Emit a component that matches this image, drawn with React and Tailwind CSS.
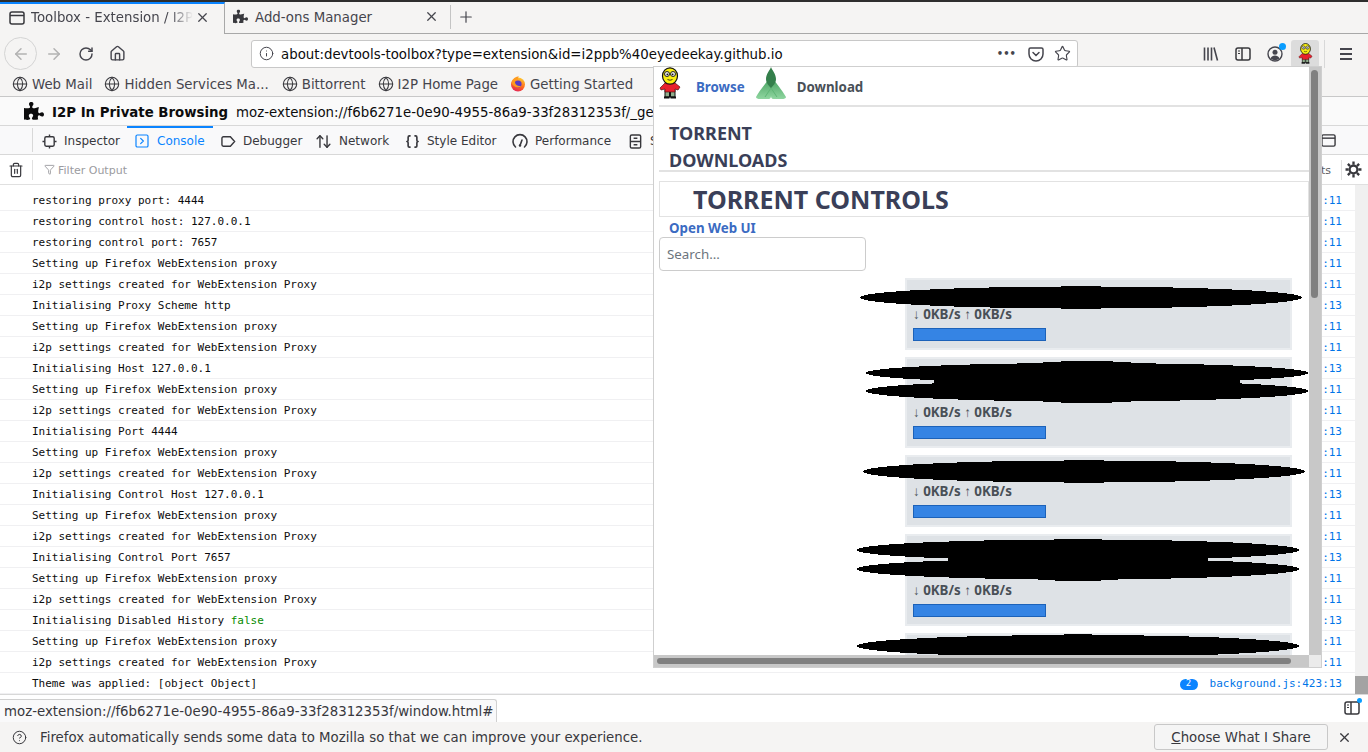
import React from "react";
import {
  ArrowLeft,
  ArrowRight,
  RotateCw,
  Home,
  Info,
  Star,
  X,
  Plus,
  Globe,
  Trash2,
  Filter,
  SquareChevronRight,
  ArrowUpDown,
  Braces,
  CircleHelp,
} from "lucide-react";
import { FaPuzzlePiece } from "react-icons/fa";

const SETUP = "Setting up Firefox WebExtension proxy";
const CREATED = "i2p settings created for WebExtension Proxy";

const logs = [
  { text: "restoring proxy port: 4444", line: "11" },
  { text: "restoring control host: 127.0.0.1", line: "11" },
  { text: "restoring control port: 7657", line: "11" },
  { text: SETUP, line: "11" },
  { text: CREATED, line: "11" },
  { text: "Initialising Proxy Scheme http", line: "13" },
  { text: SETUP, line: "11" },
  { text: CREATED, line: "11" },
  { text: "Initialising Host 127.0.0.1", line: "13" },
  { text: SETUP, line: "11" },
  { text: CREATED, line: "11" },
  { text: "Initialising Port 4444", line: "13" },
  { text: SETUP, line: "11" },
  { text: CREATED, line: "11" },
  { text: "Initialising Control Host 127.0.0.1", line: "13" },
  { text: SETUP, line: "11" },
  { text: CREATED, line: "11" },
  { text: "Initialising Control Port 7657", line: "13" },
  { text: SETUP, line: "11" },
  { text: CREATED, line: "11" },
  { text: "Initialising Disabled History ", value: "false", line: "13" },
  { text: SETUP, line: "11" },
  { text: CREATED, line: "11" },
  { text: "Theme was applied: [object Object]", line: "13", badge: "2" },
];

const Mascot = ({ className }) => (
  <svg viewBox="0 0 22 32" className={className}>
    <rect x="6" y="23" width="4.5" height="7" fill="#8fae8c" stroke="#111" strokeWidth="1" />
    <rect x="11.5" y="23" width="4.5" height="7" fill="#8fae8c" stroke="#111" strokeWidth="1" />
    <rect x="5" y="29.5" width="5.5" height="2" fill="#111" />
    <rect x="11.5" y="29.5" width="5.5" height="2" fill="#111" />
    <path d="M6 16h10l5 4-2 3-3-1v3H6v-3l-4 1-1-2z" fill="#e8202c" stroke="#511" strokeWidth="0.7" />
    <ellipse cx="11" cy="9" rx="7.5" ry="8.2" fill="#f8ee10" stroke="#111" strokeWidth="1.2" />
    <circle cx="8" cy="7" r="2.5" fill="#e9e9e9" stroke="#111" strokeWidth="0.9" />
    <circle cx="14" cy="7" r="2.5" fill="#e9e9e9" stroke="#111" strokeWidth="0.9" />
    <circle cx="8.4" cy="7.3" r="0.9" fill="#111" />
    <circle cx="13.6" cy="7.3" r="0.9" fill="#111" />
    <path d="M8.5 12.5q2.5 1.5 5 0" fill="none" stroke="#111" strokeWidth="0.8" />
  </svg>
);

const GreenLogo = () => (
  <svg viewBox="0 0 32 34" className="w-[32px] h-[34px] shrink-0">
    <defs>
      <linearGradient id="leaf" x1="0" y1="0" x2="0" y2="1">
        <stop offset="0" stopColor="#3f9a58" />
        <stop offset="1" stopColor="#8fd6a0" />
      </linearGradient>
    </defs>
    <path d="M16 10C11 17 5 24 1 31c0 1.500 2 2 4 2h9c1 0 2-1 2-3 0 2 1 3 2 3h9c2 0 4-.5 4-2-4-7-10-14-15-21z" fill="url(#leaf)" />
    <path d="M16 1c-1 3-5 7-5 12 0 4 3 7 5 9 2-2 5-5 5-9 0-5-4-9-5-12z" fill="#347f4b" />
    <path d="M16 22l-6 9M16 22l6 9" stroke="#5fb676" strokeWidth="1" fill="none" />
  </svg>
);

const FirefoxIcon = () => (
  <svg viewBox="0 0 16 16" className="w-[16px] h-[16px] shrink-0">
    <defs>
      <linearGradient id="fx" x1="0.7" y1="0" x2="0.3" y2="1">
        <stop offset="0" stopColor="#ffcb2f" />
        <stop offset="0.55" stopColor="#ff6a1f" />
        <stop offset="1" stopColor="#e3215a" />
      </linearGradient>
    </defs>
    <circle cx="8" cy="8.500" r="7" fill="url(#fx)" />
    <circle cx="8" cy="8" r="3.600" fill="#5b3bc4" />
    <path d="M2 6c1-4 4-5.500 7-5.500-1 1-1.500 2-1 3-2 0-3.500 1-3 3 .5 3 4 4.500 7 3-1.500 2-6 3-8.500 0C2 8.500 1.800 7 2 6z" fill="#ff9a1f" />
  </svg>
);

const TabIcon = () => (
  <svg viewBox="0 0 16 16" className="w-[16px] h-[16px] shrink-0" fill="none" stroke="#38383d" strokeWidth="1.500">
    <rect x="1" y="2" width="14" height="12" rx="2" />
    <path d="M1 5.500h14" />
  </svg>
);

const PocketIcon = () => (
  <svg viewBox="0 0 16 16" className="w-[16px] h-[16px]" fill="none" stroke="#45454d" strokeWidth="1.500">
    <path d="M2.500 2h11A1.500 1.500 0 0 1 15 3.500V8a7 7 0 0 1-14 0V3.500A1.500 1.500 0 0 1 2.500 2z" />
    <path d="M5 6.500l3 3 3-3" strokeLinecap="round" />
  </svg>
);

const LibraryIcon = () => (
  <svg viewBox="0 0 16 16" className="w-[16px] h-[16px]" fill="none" stroke="#45454d" strokeWidth="1.600">
    <path d="M1.500 1.500v13M5 1.500v13M8.500 1.500v13M11 1.500l3.500 13" />
  </svg>
);

const SidebarIcon = ({ className }) => (
  <svg viewBox="0 0 16 16" className={className} fill="none" stroke="#38383d" strokeWidth="1.500">
    <rect x="1" y="2" width="14" height="12" rx="2" />
    <path d="M7 2v12" />
    <path d="M3 5h2M3 7.500h2" strokeWidth="1" />
  </svg>
);

const AccountIcon = () => (
  <svg viewBox="0 0 16 16" className="w-[16px] h-[16px]" fill="none" stroke="#45454d" strokeWidth="1.400">
    <circle cx="8" cy="8" r="7" />
    <circle cx="8" cy="6.300" r="2.500" fill="#45454d" stroke="none" />
    <path d="M3.500 12.500c1-2.200 2.600-3 4.500-3s3.500.8 4.500 3a6.500 6.500 0 0 1-9 0z" fill="#45454d" stroke="none" />
  </svg>
);

const MenuIcon = () => (
  <svg viewBox="0 0 14 14" className="w-[14px] h-[14px]" fill="none" stroke="#45454d" strokeWidth="1.800">
    <path d="M1 2h12M1 7h12M1 12h12" />
  </svg>
);

const InspectorIcon = () => (
  <svg viewBox="0 0 16 16" className="w-[15px] h-[15px]" fill="none" stroke="#38383d" strokeWidth="1.500">
    <rect x="3" y="3" width="10" height="10" rx="1.500" />
    <path d="M8 0.500V3M8 13v2.500M0.500 8H3M13 8h2.500" />
  </svg>
);

const DebuggerIcon = () => (
  <svg viewBox="0 0 16 16" className="w-[15px] h-[15px]" fill="none" stroke="#38383d" strokeWidth="1.500">
    <path d="M2.500 3h7.500l4.500 5-4.500 5H2.500A1.500 1.500 0 0 1 1 11.500v-7A1.500 1.500 0 0 1 2.500 3z" />
  </svg>
);

const GaugeIcon = () => (
  <svg viewBox="0 0 16 16" className="w-[16px] h-[16px]" fill="none" stroke="#38383d" strokeWidth="1.600">
    <path d="M3.500 14A7 7 0 1 1 12.500 14" strokeLinecap="round" />
    <path d="M8 12.500l2-5.500" strokeLinecap="round" />
    <circle cx="8" cy="12.500" r="1.200" fill="#38383d" stroke="none" />
  </svg>
);

const StorageIcon = () => (
  <svg viewBox="0 0 16 16" className="w-[15px] h-[15px]" fill="none" stroke="#38383d" strokeWidth="1.500">
    <rect x="2.500" y="1" width="11" height="14" rx="1.500" />
    <path d="M2.500 8h11M6 4.500h4M6 11.500h4" />
  </svg>
);

const DockIcon = () => (
  <svg viewBox="0 0 16 16" className="w-[15px] h-[15px]" fill="none" stroke="#38383d" strokeWidth="1.500">
    <rect x="1" y="2" width="14" height="12" rx="1.500" />
    <path d="M1 5.500h14" />
  </svg>
);

const GearIcon = () => (
  <svg viewBox="0 0 16 16" className="ml-[3px] mr-[6px] w-[17px] h-[17px]" fill="none" stroke="#38383d">
    <circle cx="8" cy="8" r="3.600" strokeWidth="2" />
    <path d="M8 .5v3M8 12.500v3M.5 8h3M12.500 8h3M2.700 2.700l2.100 2.100M11.200 11.200l2.100 2.100M13.300 2.700l-2.100 2.100M4.800 11.200l-2.100 2.100" strokeWidth="2.200" />
  </svg>
);

const bookmarks = [
  { label: "Web Mail", className: "ml-[12px]" },
  { label: "Hidden Services Ma...", className: "ml-[12px]" },
  { label: "Bittorrent", className: "ml-[13px]" },
  { label: "I2P Home Page", className: "ml-[12px]" },
  { label: "Getting Started", className: "ml-[12px]", firefox: true },
];

const tools = [
  { label: "Inspector", icon: <InspectorIcon />, className: "w-[94px] pl-[9px] pt-[2px]" },
  {
    label: "Console",
    icon: <SquareChevronRight size={16} strokeWidth={1.8} />,
    className: "w-[86px] pl-[7px] text-[#0a84ff] border-t-2 border-[#0a84ff]",
  },
  { label: "Debugger", icon: <DebuggerIcon />, className: "w-[97px] pl-[8px] pt-[2px]" },
  { label: "Network", icon: <ArrowUpDown size={17} strokeWidth={2} />, className: "w-[88px] pl-[5px] pt-[2px]" },
  { label: "Style Editor", icon: <Braces size={15} strokeWidth={2.6} />, className: "w-[107px] pl-[7px] pt-[2px]" },
  { label: "Performance", icon: <GaugeIcon />, className: "w-[115px] pl-[7px] pt-[2px]" },
  { label: "S", icon: <StorageIcon />, className: "pl-[8px] pt-[2px]" },
];

const cards = [
  { height: "h-[72px]" },
  { height: "h-[91px]" },
  { height: "h-[72px]" },
  { height: "h-[92px]" },
];

const TabStrip = () => (
  <div className="flex h-[34px] shrink-0 border-t-2 border-[#2e2e2e] bg-[#f5f4f3] text-[13.33px] text-[#45454d]">
    <div className="flex w-[225px] items-center border-t-2 border-r border-t-[#0a84ff] border-r-[#a8a8a8] pb-[3px] pl-[9px]">
      <TabIcon />
      <span className="ml-[6px] w-[162px] overflow-hidden whitespace-nowrap [mask-image:linear-gradient(to_right,black_85%,transparent)]">Toolbox - Extension / I2P</span>
      <X size={15} className="ml-[2px] shrink-0" />
    </div>
    <div className="flex flex-1 items-center border-b border-[#a8a8a8] pb-[1px]">
      <div className="flex w-[225px] items-center pl-[8px]">
        <FaPuzzlePiece size={15} className="shrink-0 text-[#38383d]" />
        <span className="ml-[7px] pt-[2px]">Add-ons Manager</span>
        <X size={15} className="ml-[52px]" />
      </div>
      <div className="h-[24px] w-px bg-[#c4c4c4]" />
      <Plus size={18} strokeWidth={1.6} className="ml-[6px]" />
    </div>
  </div>
);

const NavBar = () => (
  <div className="flex h-[39px] shrink-0 items-center bg-[#f5f4f3] text-[#45454d]">
    <div className="ml-[4px] flex h-[33px] w-[33px] items-center justify-center rounded-full border border-[#d4d4d4]">
      <ArrowLeft size={18} className="text-[#b2b2b2]" />
    </div>
    <ArrowRight size={18} className="ml-[8px] text-[#b2b2b2]" />
    <RotateCw size={16} strokeWidth={2.2} className="ml-[15px]" />
    <Home size={17} strokeWidth={2} className="ml-[15px]" />
    <div className="ml-[125px] flex h-[28px] w-[827px] items-center rounded-[3px] border border-[#c8c8c8] bg-white pl-[7px] pr-[6px]">
      <Info size={15} strokeWidth={1.6} className="shrink-0" />
      <span className="ml-[7px] flex-1 pt-[2px] text-[13.33px] leading-none text-[#0c0c0d] whitespace-nowrap">about:devtools-toolbox?type=extension&amp;id=i2ppb%40eyedeekay.github.io</span>
      <span className="text-[10px] font-bold leading-none">•••</span>
      <span className="ml-[12px]"><PocketIcon /></span>
      <Star size={17} strokeWidth={1.6} className="ml-[10px]" />
    </div>
    <span className="ml-[125px]"><LibraryIcon /></span>
    <SidebarIcon className="ml-[16px] w-[16px] h-[16px]" />
    <span className="relative ml-[16px]">
      <AccountIcon />
      <span className="absolute -right-[3px] -top-[3px] h-[7px] w-[7px] rounded-full bg-[#0a9dff]" />
    </span>
    <div className="ml-[8px] flex h-[28px] w-[28px] items-center justify-center rounded-[3px] bg-[#dcdcdc]">
      <Mascot className="w-[15px] h-[21px]" />
    </div>
    <div className="ml-[5px] h-[28px] w-px bg-[#d8d8d8]" />
    <span className="ml-[14px]"><MenuIcon /></span>
  </div>
);

const Bookmarks = () => (
  <div className="flex h-[24px] shrink-0 items-center border-b border-[#c8c8c8] bg-[#f5f4f3] text-[13.33px] text-[#45454d]">
    {bookmarks.map((item) => (
      <div key={item.label} className={`flex items-center gap-[4px] whitespace-nowrap ${item.className}`}>
        {item.firefox ? <FirefoxIcon /> : <Globe size={16} strokeWidth={1.6} className="text-[#38383d]" />}
        {item.label}
      </div>
    ))}
  </div>
);

const ExtensionHeader = () => (
  <div className="flex h-[29px] shrink-0 items-center border-b border-[#d8d8d8] bg-[#fafafa] pl-[24px] text-[13.33px] text-[#0c0c0d]">
    <FaPuzzlePiece size={20} className="shrink-0" />
    <span className="ml-[8px] pt-[3px] font-bold">I2P In Private Browsing</span>
    <span className="ml-[8px] w-[419px] overflow-hidden pt-[3px] whitespace-nowrap">moz-extension://f6b6271e-0e90-4955-86a9-33f28312353f/_generated_background_page.html</span>
  </div>
);

const ToolTabs = () => (
  <div className="flex h-[29px] shrink-0 items-stretch border-b border-[#d8d8d8] bg-[#f9f9fa] text-[12px] text-[#38383d]">
    <div className="ml-[32px] my-[2px] w-px bg-[#d8d8d8]" />
    {tools.map((tool) => (
      <div key={tool.label} className={`flex shrink-0 items-center gap-[7px] ${tool.className}`}>
        {tool.icon}
        {tool.label}
      </div>
    ))}
    <div className="flex-1" />
    <div className="mr-[32px] flex items-center"><DockIcon /></div>
  </div>
);

const FilterBar = () => (
  <div className="flex h-[30px] shrink-0 items-center border-b border-[#e0e0e0] bg-white text-[11px] text-[#9b9ba0]">
    <Trash2 size={16} strokeWidth={1.8} className="ml-[8px] text-[#38383d]" />
    <div className="ml-[8px] h-[20px] w-px bg-[#e0e0e0]" />
    <Filter size={11} className="ml-[11px]" />
    <span className="ml-[3px] pt-[3px]">Filter Output</span>
    <span className="ml-auto pt-[3px] text-[#5c5c5f]">Requests</span>
    <div className="ml-[10px] h-[20px] w-px bg-[#e0e0e0]" />
    <GearIcon />
  </div>
);

const LogRow = ({ item, lineNo }) => (
  <div className="flex h-[21px] items-center border-b border-[#f0f0f2] pl-[32px] pr-[13px] pt-[2px]">
    <span className="whitespace-pre text-[#0c0c0d]">
      {item.text}
      {item.value && <span className="text-[#058b00]">{item.value}</span>}
    </span>
    {item.badge && (
      <span className="ml-auto flex h-[11px] w-[18px] items-center justify-center rounded-full bg-[#0a84ff] text-[9px] text-white">
        {item.badge}
      </span>
    )}
    <span className={`${item.badge ? "ml-[12px]" : "ml-auto"} text-[#0074e8]`}>
      background.js:{lineNo}:{item.line}
    </span>
  </div>
);

const Console = () => (
  <div className="flex min-h-0 flex-1 bg-white">
    <div className="flex-1 pt-[5px] font-['DejaVu_Sans_Mono',monospace] text-[11px]">
      {logs.map((item, index) => (
        <LogRow key={index} item={item} lineNo={index === 23 ? 423 : 400} />
      ))}
    </div>
    <div className="flex w-[13px] flex-col justify-end bg-[#f0f0f0]">
      <div className="h-[18px] bg-[#a3a3a3]" />
    </div>
  </div>
);

const TorrentCard = ({ height }) => (
  <div className={`${height} mb-[7px] ml-[246px] flex w-[387px] shrink-0 flex-col justify-end border-2 border-[#e9ecef] bg-[#dee2e6] pb-[7px] pl-[6px]`}>
    <div className="mb-[4px] text-[13.33px] font-bold leading-[19px] text-[#495057]">↓ 0KB/s ↑ 0KB/s</div>
    <div className="h-[13px] w-[133px] border border-[#1c62b9] bg-[#3584e4]" />
  </div>
);

const Popup = () => (
  <div className="absolute left-[653px] top-[66px] grid h-[602px] w-[669px] grid-cols-[1fr_12px] grid-rows-[1fr_12px] border border-[#cfcfcf] bg-white font-['Noto_Sans',sans-serif]">
    <div className="relative overflow-hidden pl-[5px]">
      <div className="flex h-[40px] items-center border-b-2 border-[#e2e2e2] text-[13.33px] font-bold">
        <Mascot className="mb-[6px] w-[22px] h-[32px] shrink-0" />
        <span className="ml-[15px] pt-[3px] text-[#3b6bc2]">Browse</span>
        <span className="ml-[10px] mb-[6px]"><GreenLogo /></span>
        <span className="ml-[10px] pt-[3px] text-[#495057]">Download</span>
      </div>
      <div className="h-[65px] border-b-2 border-[#e2e2e2] pl-[10px] pt-[13px] text-[18px] font-bold leading-[27px] text-[#3a3f58]">
        TORRENT
        <br />
        DOWNLOADS
      </div>
      <div className="mt-[9px] flex h-[36px] items-center border border-[#e2e2e2] pl-[33px] pt-[1px] text-[25px] font-bold text-[#3a3f58]">
        TORRENT CONTROLS
      </div>
      <div className="pl-[10px] pt-[2px] text-[13.33px] font-bold leading-[18px] text-[#3b6bc2]">Open Web UI</div>
      <div className="flex h-[34px] w-[207px] items-center rounded-[4px] border border-[#cccccc] pt-[1px] pl-[7px] text-[13.33px] text-[#6c757d]">
        Search...
      </div>
      <div className="mt-[7px]">
        {cards.map((card, index) => (
          <TorrentCard key={index} height={card.height} />
        ))}
        <div className="ml-[246px] h-[40px] w-[387px] border-2 border-[#e9ecef] bg-[#dee2e6]" />
      </div>
      {/* names blacked out in the picture */}
      <svg viewBox="654 67 656 588" shapeRendering="crispEdges" className="absolute left-0 top-0 h-[588px] w-[656px]">
        <ellipse cx="1081" cy="297.500" rx="221" ry="11" />
        <ellipse cx="1081" cy="297.500" rx="50" ry="12" />
        <ellipse cx="1087" cy="373" rx="221" ry="10" />
        <ellipse cx="1087" cy="391" rx="221" ry="10.500" />
        <rect x="934" y="368" width="306" height="29" />
        <ellipse cx="1087" cy="382" rx="120" ry="21" />
        <ellipse cx="1084" cy="471.500" rx="221" ry="11" />
        <ellipse cx="1084" cy="471.500" rx="50" ry="12" />
        <ellipse cx="1078" cy="550" rx="221" ry="10.500" />
        <ellipse cx="1078" cy="569" rx="221" ry="10.500" />
        <rect x="948" y="546" width="260" height="28" />
        <ellipse cx="1078" cy="560" rx="110" ry="21" />
        <ellipse cx="1078" cy="646" rx="221" ry="11" />
        <ellipse cx="1078" cy="646" rx="50" ry="12" />
      </svg>
    </div>
    <div className="bg-[#c8c8c8] pl-[2px] pt-[3px]">
      <div className="h-[228px] w-[7px] rounded-full bg-[#808080]" />
    </div>
    <div className="bg-[#c8c8c8] pl-[3px] pt-[3px]">
      <div className="h-[6px] w-[634px] rounded-full bg-[#808080]" />
    </div>
    <div className="bg-[#ebebeb]" />
  </div>
);

const StatusArea = () => (
  <div className="flex h-[28px] shrink-0 items-end border-t border-[#d8d8d8] bg-white">
    <div className="flex h-[23px] w-[497px] items-center rounded-tr-[3px] border-r border-t border-[#d0d0d0] bg-[#f9f9fa] pl-[4px] pt-[2px] text-[13.33px] text-[#38383d] whitespace-nowrap">
      moz-extension://f6b6271e-0e90-4955-86a9-33f28312353f/window.html#
    </div>
    <div className="relative mb-[6px] ml-auto mr-[8px]">
      <SidebarIcon className="w-[16px] h-[16px]" />
      <span className="absolute -right-[2px] -top-[2px] h-[5px] w-[5px] rounded-full bg-[#0a9dff]" />
    </div>
  </div>
);

const NotificationBar = () => (
  <div className="flex h-[30px] shrink-0 items-center bg-[#f5f4f3] text-[13.33px] text-[#38383d]">
    <CircleHelp size={15} strokeWidth={1.6} className="ml-[12px]" />
    <span className="ml-[13px] pt-[2px] whitespace-nowrap">Firefox automatically sends some data to Mozilla so that we can improve your experience.</span>
    <div className="ml-auto flex h-[26px] w-[174px] items-center justify-center rounded-[3px] border border-[#c8c8c8] bg-[#f5f5f5] pt-[2px]">
      <span><span className="underline">C</span>hoose What I Share</span>
    </div>
    <X size={15} className="ml-[9px] mr-[16px]" />
  </div>
);

export default function App() {
  return (
    <div className="relative flex h-[752px] w-[1368px] flex-col overflow-hidden bg-white font-['DejaVu_Sans',sans-serif]">
      <TabStrip />
      <NavBar />
      <Bookmarks />
      <ExtensionHeader />
      <ToolTabs />
      <FilterBar />
      <Console />
      <StatusArea />
      <NotificationBar />
      <Popup />
    </div>
  );
}
